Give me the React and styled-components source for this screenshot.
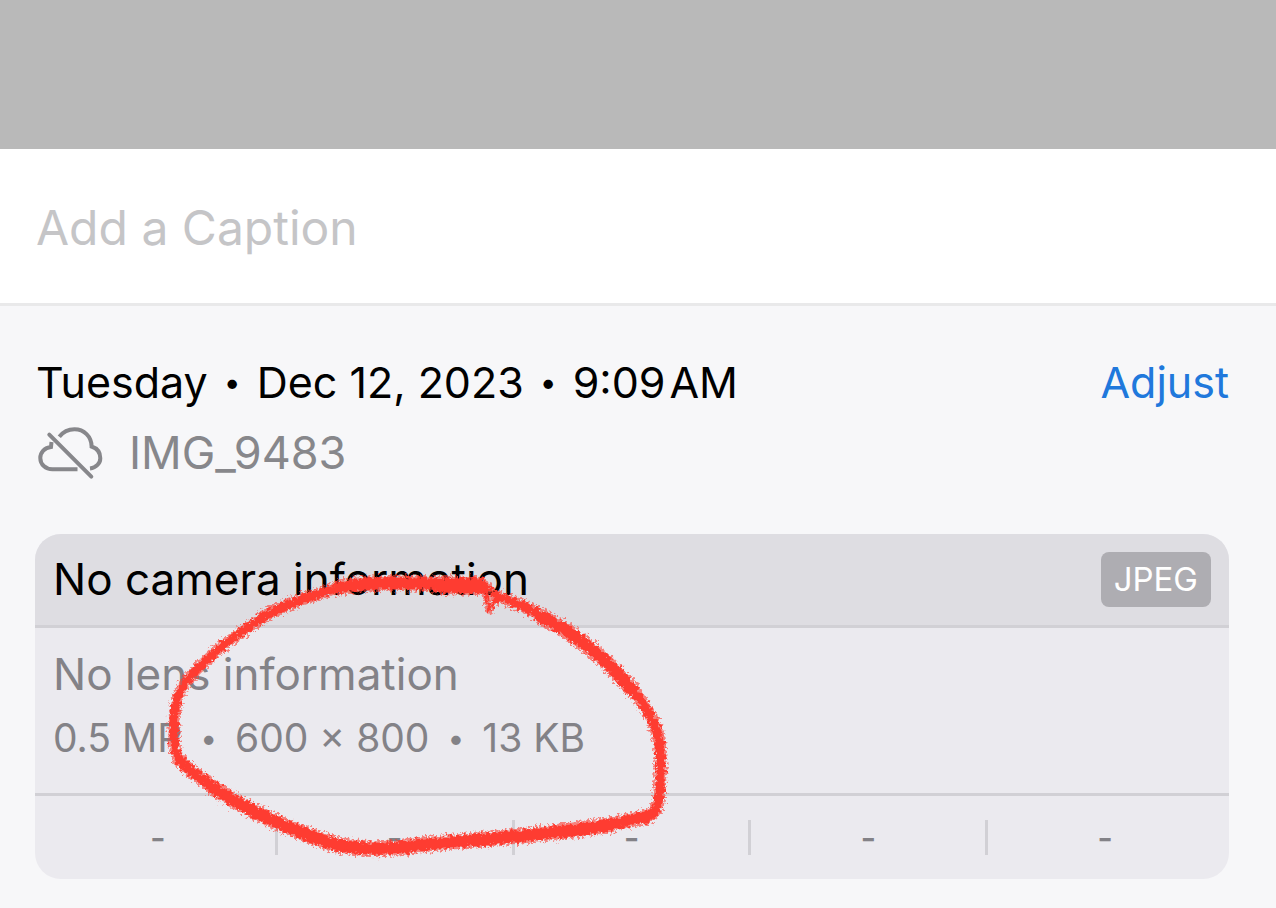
import React from 'react'
import styled, { createGlobalStyle } from 'styled-components'

const stats = ['-', '-', '-', '-', '-']

const strokes = [
    { width: 11, d: 'M263 618 C237 634 219 648 207 660 C195 671 185 680 180 692 C173 707 174 725 174 742 C175 752 177 758 185 766' },
    { width: 12, d: 'M262 617 C290 603 312 594 345 587' },
    { width: 15, d: 'M340 587 C380 581 430 583 482 586' },
    { width: 18, d: 'M440 585 L480 586' },
    { width: 6, d: 'M484 582 L498 597 L489 611 Z' },
    { width: 12, d: 'M496 596 C525 605 550 619 572 634' },
    { width: 15, d: 'M540 616 C582 637 610 663 632 690' },
    { width: 12, d: 'M626 682 C645 704 657 722 660 745 C661 765 661 780 659 799 C658 808 654 814 646 819' },
    { width: 14, d: 'M648 816 C610 826 580 829 540 834' },
    { width: 15, d: 'M610 825 C540 836 470 840 420 845 C385 851 350 849 328 843' },
    { width: 15, d: 'M342 846 C300 835 250 812 212 787' },
    { width: 13, d: 'M225 794 C206 783 192 773 179 760' },
]

export default function App() {
    return (
        <>
            <GlobalStyle />
            <PhotoArea />
            <CaptionBar>
                <CaptionInput type="text" placeholder="Add a Caption" aria-label="Add a Caption" />
            </CaptionBar>
            <InfoPanel>
                <DateRow>
                    <DateText>
                        <span>Tuesday</span>
                        <Dot>•</Dot>
                        <span>Dec 12, 2023</span>
                        <Dot>•</Dot>
                        <span>9:09{'\u200a'}AM</span>
                    </DateText>
                    <AdjustButton type="button">Adjust</AdjustButton>
                </DateRow>
                <FileRow>
                    <CloudOffIcon />
                    <span>IMG_9483</span>
                </FileRow>
                <CardWrapper>
                    <Card>
                        <CardHeader>
                            <CardTitle>No camera information</CardTitle>
                            <Badge>JPEG</Badge>
                        </CardHeader>
                        <CardBody>
                            <Lens>No lens information</Lens>
                            <Meta>
                                <span>0.5 MP</span>
                                <Dot>•</Dot>
                                <span>600 × 800</span>
                                <Dot>•</Dot>
                                <span>13 KB</span>
                            </Meta>
                        </CardBody>
                        <Stats>
                            {stats.map((value, i) => (
                                <Stat key={i}>{value}</Stat>
                            ))}
                        </Stats>
                    </Card>
                    <CrayonCircle />
                </CardWrapper>
            </InfoPanel>
        </>
    )
}

function CloudOffIcon() {
    return (
        <CloudSvg viewBox="0 0 66 54" aria-hidden="true">
            <path d="M14.5 16 L14 21 C7.5 21.5 3.3 26.5 3.3 32 C3.3 38.5 8.5 43.3 15.5 43.3 H40.5" />
            <path d="M22.3 10.8 C26 6 31.5 3.3 37.5 3.3 C47 3.3 54.5 10.5 54.6 20.5 C60 22.3 63.3 26.8 63.3 32.2 C63.3 37.2 59.3 41.8 53 42.5" />
            <path d="M12.3 8.6 L54.3 50.6" strokeLinecap="round" />
        </CloudSvg>
    )
}

// hand drawn ring around the image dimensions
function CrayonCircle() {
    return (
        <CrayonSvg viewBox="160 570 510 290" aria-hidden="true">
            <defs>
                <filter id="crayon" x="-5%" y="-5%" width="110%" height="110%" colorInterpolationFilters="sRGB">
                    <feTurbulence type="fractalNoise" baseFrequency="0.3" numOctaves="3" seed="4" result="noise" />
                    <feDisplacementMap in="SourceGraphic" in2="noise" scale="9" xChannelSelector="R" yChannelSelector="G" />
                </filter>
                <filter id="grain" x="-5%" y="-5%" width="110%" height="110%" colorInterpolationFilters="sRGB">
                    <feTurbulence type="fractalNoise" baseFrequency="0.4" numOctaves="2" seed="11" result="noise" />
                    <feDisplacementMap in="SourceGraphic" in2="noise" scale="12" xChannelSelector="R" yChannelSelector="G" />
                </filter>
            </defs>
            <g filter="url(#grain)" opacity="0.6">
                {strokes.map((s, i) => (
                    <path key={i} strokeWidth={s.width} d={s.d} />
                ))}
            </g>
            <g filter="url(#crayon)">
                {strokes.map((s, i) => (
                    <path key={i} strokeWidth={s.width - 3} d={s.d} />
                ))}
            </g>
        </CrayonSvg>
    )
}

const GlobalStyle = createGlobalStyle`
* {
    box-sizing: border-box;
}
body {
    margin: 0;
    background: #f7f7f9;
    font-family: Inter, "Liberation Sans", sans-serif;
    color: #000;
}
button, input {
    font-family: inherit;
}
`

const PhotoArea = styled.div`
height: 149px;
background: #b9b9b9;
`

const CaptionBar = styled.div`
padding: 48px 36px 46px;
background: #fff;
border-bottom: 3px solid #e9e9ea;
`

const CaptionInput = styled.input`
display: block;
width: 100%;
height: 60px;
padding: 0;
border: none;
outline: none;
background: transparent;
font-size: 48px;
&::placeholder {
    color: #c5c5c7;
    opacity: 1;
}
`

const InfoPanel = styled.main`
padding: 46px 47px 29px 36px;
background: #f7f7f9;
`

const DateRow = styled.div`
display: flex;
justify-content: space-between;
align-items: center;
height: 60px;
`

const DateText = styled.div`
display: flex;
align-items: center;
gap: 16px;
font-size: 43px;
line-height: 58px;
white-space: nowrap;
`

const Dot = styled.span`
font-size: 30px;
`

const AdjustButton = styled.button`
padding: 0;
border: none;
background: none;
font-size: 43px;
line-height: 58px;
color: #2078dc;
cursor: pointer;
`

const FileRow = styled.div`
display: flex;
align-items: center;
gap: 26px;
margin-top: 11px;
padding-left: 1px;
font-size: 45px;
line-height: 60px;
color: #87878b;
`

const CloudSvg = styled.svg`
width: 66px;
height: 54px;
fill: none;
stroke: #87878b;
stroke-width: 4;
`

const CardWrapper = styled.section`
position: relative;
margin-top: 51px;
margin-left: -1px;
`

const Card = styled.div`
overflow: hidden;
border-radius: 26px;
background: #ebeaef;
`

const CardHeader = styled.div`
display: flex;
justify-content: space-between;
align-items: center;
padding: 18px;
border-bottom: 3px solid #d1d0d5;
background: #dedde2;
`

const CardTitle = styled.div`
font-size: 44px;
line-height: 55px;
white-space: nowrap;
`

const Badge = styled.span`
padding: 0 13px;
border-radius: 8px;
background: #aeadb2;
color: #fff;
font-size: 33px;
line-height: 55px;
`

const CardBody = styled.div`
padding: 18px;
border-bottom: 3px solid #d1d0d5;
color: #838287;
white-space: nowrap;
`

const Lens = styled.div`
font-size: 44px;
line-height: 56px;
`

const Meta = styled.div`
display: flex;
align-items: center;
gap: 18px;
margin-top: 8px;
padding-bottom: 9px;
font-size: 39px;
line-height: 56px;
`

const Stats = styled.div`
display: grid;
grid-template-columns: repeat(5, 1fr);
padding: 24px 4px 24px 6px;
color: #838287;
`

const Stat = styled.div`
border-right: 3px solid #d1d0d5;
font-size: 34px;
font-weight: 500;
line-height: 35px;
text-align: center;
&:last-child {
    border-right-color: transparent;
}
`

const CrayonSvg = styled.svg`
position: absolute;
top: 36px;
left: 125px;
width: 510px;
height: 290px;
overflow: visible;
fill: none;
stroke: #fe3c31;
stroke-linecap: round;
stroke-linejoin: round;
pointer-events: none;
`
